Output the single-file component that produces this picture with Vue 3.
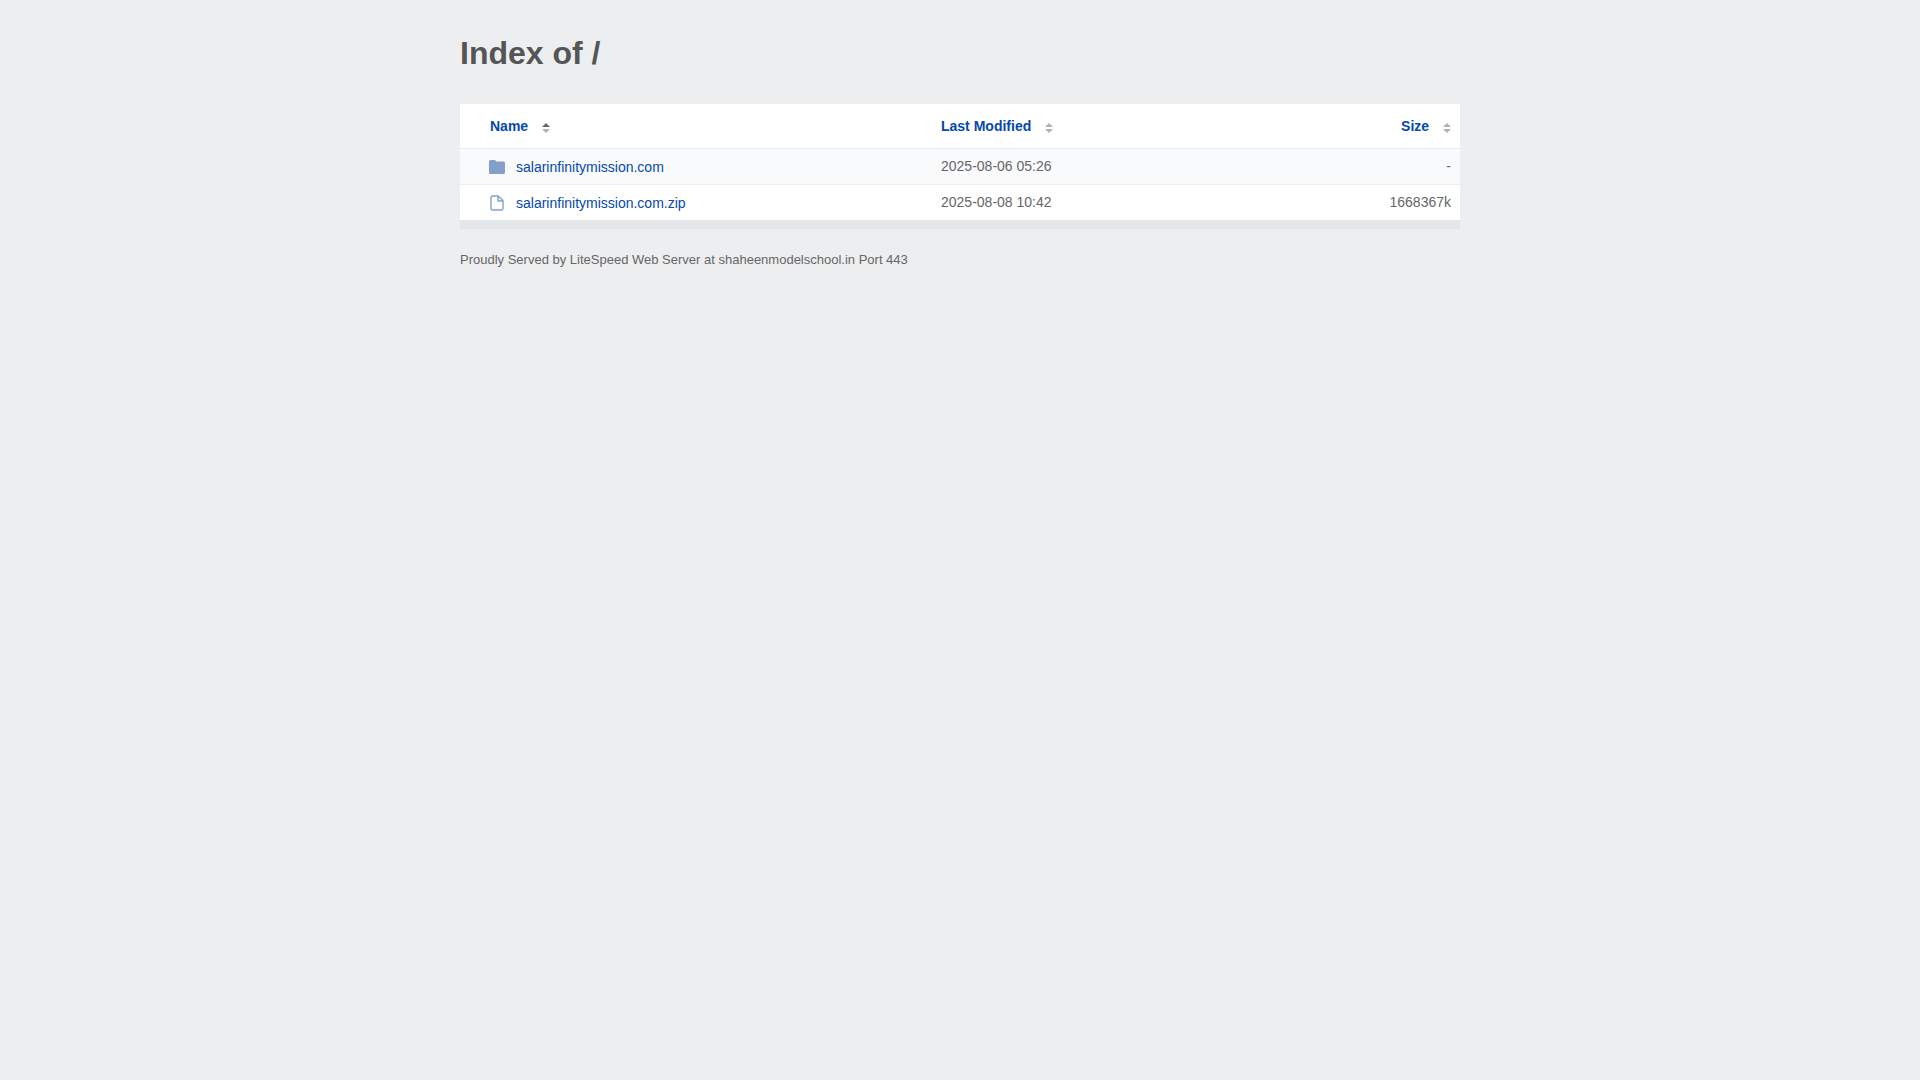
<script setup>
import { ref, computed } from 'vue'

const columns = [
  { key: 'name', label: 'Name' },
  { key: 'modified', label: 'Last Modified' },
  { key: 'size', label: 'Size' },
]

const entries = [
  { name: 'salarinfinitymission.com', folder: true, modified: '2025-08-06 05:26', size: '-', bytes: -1 },
  { name: 'salarinfinitymission.com.zip', folder: false, modified: '2025-08-08 10:42', size: '1668367k', bytes: 1668367 },
]

const sortKey = ref('name')
const ascending = ref(true)

function sortBy(key) {
  ascending.value = sortKey.value === key ? !ascending.value : true
  sortKey.value = key
}

const rows = computed(() => {
  const field = sortKey.value === 'size' ? 'bytes' : sortKey.value
  const direction = ascending.value ? 1 : -1
  return [...entries].sort((a, b) => (a[field] > b[field] ? direction : -direction))
})
</script>

<template>
  <main class="page">
    <h1>Index of /</h1>
    <div class="listing">
      <table>
        <colgroup>
          <col class="col-name" />
          <col class="col-modified" />
          <col class="col-size" />
        </colgroup>
        <thead>
          <tr>
            <th v-for="column in columns" :key="column.key" scope="col" :class="column.key">
              <a href="#" @click.prevent="sortBy(column.key)">
                {{ column.label }}
                <svg class="sort" viewBox="0 0 8 10" aria-hidden="true">
                  <path d="M0 4 4 0l4 4z" :class="{ active: sortKey === column.key && ascending }" />
                  <path d="M0 6h8l-4 4z" :class="{ active: sortKey === column.key && !ascending }" />
                </svg>
              </a>
            </th>
          </tr>
        </thead>
        <tbody>
          <tr v-for="row in rows" :key="row.name">
            <td class="name">
              <a :href="'/' + row.name">
                <svg v-if="row.folder" class="icon" viewBox="0 0 16 16" aria-hidden="true">
                  <path
                    fill="#85a0c8"
                    d="M1.500 1H5.500A1.500 1.500 0 0 1 7 2.500h7.500A1.500 1.500 0 0 1 16 4v9.500a1.500 1.500 0 0 1-1.500 1.500h-13A1.500 1.500 0 0 1 0 13.500v-11A1.500 1.500 0 0 1 1.500 1z"
                  />
                </svg>
                <svg v-else class="icon" viewBox="0 0 16 16" aria-hidden="true">
                  <path
                    fill="none"
                    stroke="#85a0c8"
                    stroke-width="1.4"
                    stroke-linejoin="round"
                    d="M3.500 1h5.500L14 5.500v8a1.500 1.500 0 0 1-1.500 1.500h-9A1.500 1.500 0 0 1 2 13.500v-11A1.500 1.500 0 0 1 3.500 1zM9 1v5h5"
                  />
                </svg>
                <span>{{ row.name }}</span>
              </a>
            </td>
            <td class="modified">{{ row.modified }}</td>
            <td class="size">{{ row.size }}</td>
          </tr>
        </tbody>
      </table>
    </div>
    <footer>Proudly Served by LiteSpeed Web Server at shaheenmodelschool.in Port 443</footer>
  </main>
</template>

<style>
body {
  background: #edeef0;
}
</style>

<style scoped>
.page {
  max-width: 1000px;
  margin: 0 auto;
  padding-top: 33px;
  font-family: "Liberation Sans", Arial, sans-serif;
  font-size: 14px;
  line-height: 20px;
  color: #666;
}

h1 {
  margin: 0 0 31px;
  font-size: 32px;
  line-height: 40px;
  color: #555;
}

.listing {
  border-bottom: 9px solid #e3e7ea;
}

table {
  width: 100%;
  table-layout: fixed;
  border-collapse: separate;
  border-spacing: 0;
  background: #fff;
}

.col-name {
  width: 47.2%;
}

.col-modified {
  width: 26%;
}

th,
td {
  box-sizing: border-box;
  padding: 0 9px;
  text-align: left;
}

th {
  height: 44px;
}

td {
  height: 36px;
  padding-bottom: 2px;
  border-top: 1px solid #eaecef;
}

tbody tr:nth-child(odd) {
  background: #f9fafc;
}

th.name {
  padding-left: 30px;
}

td.name {
  padding-bottom: 0;
  padding-left: 29px;
}

.size {
  text-align: right;
}

a {
  color: #0548ae;
  text-decoration: none;
}

a:hover {
  text-decoration: underline;
}

td a {
  display: flex;
  align-items: center;
  gap: 11px;
  width: fit-content;
}

.icon {
  width: 16px;
  height: 16px;
}

.sort {
  width: 8px;
  height: 10px;
  margin-left: 10px;
  vertical-align: -2px;
  fill: #b2b2b2;
}

.sort .active {
  fill: #666;
}

footer {
  margin-top: 21px;
  font-size: 13px;
}
</style>
